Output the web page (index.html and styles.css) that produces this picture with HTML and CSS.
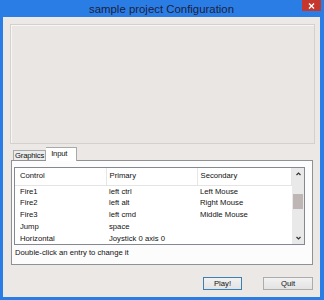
FILE: index.html
```html
<!DOCTYPE html>
<html lang="en">
<head>
  <meta charset="UTF-8">
  <title>sample project Configuration</title>
  <link rel="stylesheet" href="styles.css">
</head>
<body>

  <div class="window">
    <!-- title bar -->
    <div class="titlebar">
      <span></span>
      <span class="title">sample project Configuration</span>
      <button class="close" type="button">
        <svg width="7" height="6" viewBox="0 0 7 6"><path d="M1 0.5 L6 5.5 M6 0.5 L1 5.5" stroke="#fff" stroke-width="1.4" fill="none"/></svg>
      </button>
    </div>

    <div class="client">
      <!-- banner image area (empty) -->
      <div class="banner"></div>

      <div class="tabs">
        <div class="tab-strip">
          <span class="tab">Graphics</span>
          <span class="tab active">Input</span>
        </div>

        <div class="tab-page">
          <div class="list">
            <table class="grid">
              <colgroup>
                <col class="c1"><col class="c2"><col>
              </colgroup>
              <thead>
                <tr><th>Control</th><th>Primary</th><th>Secondary</th></tr>
              </thead>
              <tbody>
                <tr><td>Fire1</td><td>left ctrl</td><td>Left Mouse</td></tr>
                <tr><td>Fire2</td><td>left alt</td><td>Right Mouse</td></tr>
                <tr><td>Fire3</td><td>left cmd</td><td>Middle Mouse</td></tr>
                <tr><td>Jump</td><td>space</td><td></td></tr>
                <tr><td>Horizontal</td><td>Joystick 0 axis 0</td><td></td></tr>
              </tbody>
            </table>
            <div class="scrollbar">
              <span class="arrow">
                <svg width="5" height="4" viewBox="0 0 5 4"><path d="M0.5 3 L2.5 1 L4.5 3" stroke="#333" stroke-width="1.2" fill="none"/></svg>
              </span>
              <span class="track"><span class="thumb"></span></span>
              <span class="arrow">
                <svg width="5" height="4" viewBox="0 0 5 4"><path d="M0.5 1 L2.5 3 L4.5 1" stroke="#333" stroke-width="1.2" fill="none"/></svg>
              </span>
            </div>
          </div>
          <p class="hint">Double-click an entry to change it</p>
        </div>
      </div>

      <div class="actions">
        <button class="btn default" type="button">Play!</button>
        <button class="btn quit" type="button">Quit</button>
      </div>
    </div>
  </div>

</body>
</html>
```

FILE: styles.css
```css
* {
  box-sizing: border-box;
}
body {
  margin: 0;
  font-family: "Liberation Sans", Arial, sans-serif;
  font-size: 7.7px;
  color: #111;
  background: #2a7ae3;
}
.window {
  width: 324px;
  height: 300px;
  display: flex;
  flex-direction: column;
  padding: 0 4px 3px 3px;
  background: #2b7de6;
}
.titlebar {
  height: 17px;
  display: grid;
  grid-template-columns: 1fr auto 1fr;
  align-items: center;
}
.title {
  font-size: 11.4px;
  color: #1c1f3c;
}
.close {
  justify-self: end;
  align-self: start;
  width: 19px;
  height: 11px;
  margin-right: -1px;
  padding: 0;
  border: none;
  background: #c5372c;
  display: flex;
  align-items: center;
  justify-content: center;
}
.client {
  flex: 1;
  display: flex;
  flex-direction: column;
  padding: 7px 5px 0 7px;
  background: #ebe8e6;
}
.banner {
  height: 120px;
  border: 1px solid #d3d0ce;
  box-shadow: inset 1px 1px 0 #f7f6f5;
  background: #e9e6e4;
}
.tabs {
  margin: 3px 2px 0 1px;
}
.tab-strip {
  height: 13px;
  display: flex;
  align-items: flex-end;
  padding-left: 2px;
}
.tab {
  height: 10px;
  line-height: 9px;
  padding: 0 1px;
  white-space: nowrap;
  letter-spacing: -0.2px;
  border: 1px solid #a9a9a9;
  border-bottom: none;
  background: #ececec;
}
.tab.active {
  position: relative;
  height: 14px;
  width: 31px;
  margin-bottom: -1px;
  line-height: 12px;
  padding-left: 5px;
  border-left: none;
  background: #fff;
  z-index: 1;
}
.tab-page {
  height: 105px;
  border: 1px solid #8f9195;
  background: #fcfcfc;
  padding: 6px 7px 0 2px;
}
.list {
  height: 78px;
  display: flex;
  border: 1px solid #848890;
  background: #fff;
}
.grid {
  flex: 1;
  border-collapse: collapse;
  table-layout: fixed;
}
.grid .c1 {
  width: 91px;
}
.grid .c2 {
  width: 91px;
}
.grid th {
  height: 17px;
  font-weight: normal;
  text-align: left;
  padding: 0 0 1px 5px;
  border-right: 1px solid #e6e6e6;
  border-bottom: 1px solid #e4e4e4;
}
.grid th:nth-child(2),
.grid th:nth-child(3) {
  padding-left: 3px;
}
.grid td {
  height: 11.5px;
  padding: 0 0 0 5px;
  white-space: nowrap;
  overflow: hidden;
}
.grid td:nth-child(2),
.grid td:nth-child(3) {
  padding-left: 3px;
}
.scrollbar {
  width: 12px;
  display: flex;
  flex-direction: column;
  background: #e9e9e9;
}
.arrow {
  height: 12px;
  display: flex;
  align-items: center;
  justify-content: center;
}
.track {
  flex: 1;
  padding-top: 14px;
}
.thumb {
  display: block;
  height: 15px;
  margin: 0 1px;
  background: #bdb6b5;
}
.hint {
  margin: 3px 0 0 1px;
  line-height: 10px;
}
.actions {
  display: flex;
  justify-content: flex-end;
  gap: 21px;
  margin: 12px 2px 0 0;
}
.btn {
  height: 13px;
  padding: 0;
  font-family: inherit;
  font-size: 7.7px;
  color: #111;
  border: 1px solid #acacac;
  background: linear-gradient(#f2f2f2, #e3e3e3);
}
.btn.default {
  width: 39px;
  border-color: #3c7fb1;
}
.btn.quit {
  width: 50px;
}
```
